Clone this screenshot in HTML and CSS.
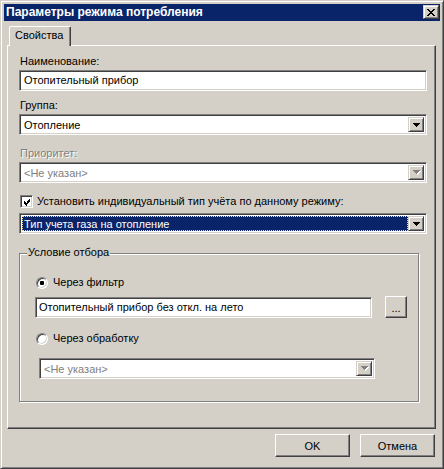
FILE: index.html
```html
<!DOCTYPE html>
<html lang="ru">
<head>
<meta charset="utf-8">
<title>Параметры режима потребления</title>
<link rel="stylesheet" href="styles.css">
</head>
<body>
<div class="window">
  <div class="titlebar">
    <span class="title">Параметры режима потребления</span>
    <span class="close">
      <svg width="8" height="7" viewBox="0 0 8 7" shape-rendering="crispEdges"><path fill="#000" d="M0 0h2v1H0zM6 0h2v1H6zM1 1h2v1H1zM5 1h2v1H5zM2 2h4v1H2zM3 3h2v1H3zM2 4h4v1H2zM1 5h2v1H1zM5 5h2v1H5zM0 6h2v1H0zM6 6h2v1H6z"/></svg>
    </span>
  </div>
  <div class="tabs"><div class="tab">Свойства</div></div>
  <div class="panel">
    <div class="label">Наименование:</div>
    <div class="field sunken">Отопительный прибор</div>

    <div class="label l-group">Группа:</div>
    <div class="combo sunken">
      <span class="combo-text">Отопление</span>
      <span class="drop"><svg width="7" height="4" viewBox="0 0 7 4" shape-rendering="crispEdges"><path fill="#000" d="M0 0h7v1H0zM1 1h5v1H1zM2 2h3v1H2zM3 3h1v1H3z"/></svg></span>
    </div>

    <div class="label l-prio disabled">Приоритет:</div>
    <div class="combo sunken">
      <span class="combo-text gray">&lt;Не указан&gt;</span>
      <span class="drop"><svg width="8" height="5" viewBox="0 0 8 5" shape-rendering="crispEdges"><path fill="#fff" d="M1 1h7v1H1zM2 2h5v1H2zM3 3h3v1H3zM4 4h1v1H4z"/><path fill="#808080" d="M0 0h7v1H0zM1 1h5v1H1zM2 2h3v1H2zM3 3h1v1H3z"/></svg></span>
    </div>

    <div class="check-row">
      <span class="checkbox sunken"><svg width="9" height="9" viewBox="0 0 9 9" shape-rendering="crispEdges"><path fill="#000" d="M7 1h1v1H7zM6 2h2v1H6zM1 3h1v1H1zM5 3h3v1H5zM1 4h2v1H1zM4 4h3v1H4zM1 5h5v1H1zM2 6h3v1H2zM3 7h1v1H3z"/></svg></span>
      <span>Установить индивидуальный тип учёта по данному режиму:</span>
    </div>
    <div class="combo sunken combo-sel">
      <span class="combo-text selected">Тип учета газа на отопление</span>
      <span class="drop"><svg width="7" height="4" viewBox="0 0 7 4" shape-rendering="crispEdges"><path fill="#000" d="M0 0h7v1H0zM1 1h5v1H1zM2 2h3v1H2zM3 3h1v1H3z"/></svg></span>
    </div>

    <div class="groupbox">
      <span class="legend">Условие отбора</span>
      <div class="radio-row first">
        <span class="radio on"></span>
        <span>Через фильтр</span>
      </div>
      <div class="filter-row">
        <div class="field sunken filter-field">Отопительный прибор без откл. на лето</div>
        <div class="btn small">...</div>
      </div>
      <div class="radio-row second">
        <span class="radio"></span>
        <span>Через обработку</span>
      </div>
      <div class="combo sunken inner-combo">
        <span class="combo-text gray">&lt;Не указан&gt;</span>
        <span class="drop"><svg width="8" height="5" viewBox="0 0 8 5" shape-rendering="crispEdges"><path fill="#fff" d="M1 1h7v1H1zM2 2h5v1H2zM3 3h3v1H3zM4 4h1v1H4z"/><path fill="#808080" d="M0 0h7v1H0zM1 1h5v1H1zM2 2h3v1H2zM3 3h1v1H3z"/></svg></span>
      </div>
    </div>
  </div>
  <div class="buttons">
    <div class="btn push">OK</div>
    <div class="btn push">Отмена</div>
  </div>
</div>
</body>
</html>
```
FILE: styles.css
```css
* { box-sizing: border-box; }
html, body { margin: 0; padding: 0; background: #d4d0c8; }
body {
  font-family: "Liberation Sans", Arial, sans-serif;
  font-size: 11px;
  color: #000;
}
.window {
  width: 444px;
  height: 469px;
  background: #d4d0c8;
  border: 1px solid;
  border-color: #d4d0c8 #404040 #404040 #d4d0c8;
  box-shadow: inset 1px 1px 0 #fff, inset -1px -1px 0 #808080;
  padding: 3px;
  display: flex;
  flex-direction: column;
}
.titlebar {
  height: 17px;
  background: #0a246a;
  color: #fff;
  display: flex;
  justify-content: space-between;
  align-items: flex-start;
  padding-left: 2px;
}
.title {
  font-weight: bold;
  font-size: 12px;
  line-height: 17px;
}
.close {
  width: 16px;
  height: 14px;
  margin-top: 1px;
  margin-right: 1px;
  background: #d4d0c8;
  border: 1px solid;
  border-color: #d4d0c8 #404040 #404040 #d4d0c8;
  box-shadow: inset 1px 1px 0 #fff, inset -1px -1px 0 #808080;
  display: flex;
  align-items: center;
  justify-content: center;
}
.close svg { display: block; }
.tabs {
  margin-top: 5px;
  padding-left: 5px;
  height: 19px;
  display: flex;
  align-items: flex-start;
}
.tab {
  position: relative;
  z-index: 1;
  width: 62px;
  height: 20px;
  background: #d4d0c8;
  border-top: 1px solid #fff;
  border-left: 1px solid #fff;
  border-right: 1px solid #404040;
  border-top-left-radius: 2px;
  border-top-right-radius: 2px;
  box-shadow: inset -1px 0 0 #808080;
  padding-left: 5px;
  line-height: 17px;
}
.panel {
  margin-left: 3px;
  width: 429px;
  height: 384px;
  border: 1px solid;
  border-color: #fff #404040 #404040 #fff;
  box-shadow: inset -1px -1px 0 #808080;
  padding: 9px 8px 0 11px;
  display: flex;
  flex-direction: column;
}
.label {
  line-height: 13px;
  height: 13px;
  padding-left: 1px;
  margin-bottom: 2px;
}
.l-group { margin-top: 8px; }
.l-prio { margin-top: 12px; }
.disabled { color: #808080; text-shadow: 1px 1px 0 #fff; }
.sunken {
  background: #fff;
  border: 1px solid;
  border-color: #808080 #fff #fff #808080;
  box-shadow: inset 1px 1px 0 #404040, inset -1px -1px 0 #d4d0c8;
}
.field {
  height: 21px;
  padding: 0 4px;
  line-height: 19px;
  white-space: nowrap;
  overflow: hidden;
}
.combo {
  height: 21px;
  padding: 2px;
  display: flex;
  align-items: stretch;
}
.combo-text {
  flex: 1;
  padding-left: 2px;
  line-height: 17px;
  white-space: nowrap;
}
.gray { color: #808080; }
.drop {
  width: 16px;
  background: #d4d0c8;
  border: 1px solid;
  border-color: #d4d0c8 #404040 #404040 #d4d0c8;
  box-shadow: inset 1px 1px 0 #fff, inset -1px -1px 0 #808080;
  display: flex;
  align-items: center;
  justify-content: center;
}
.drop svg { display: block; margin-left: 1px; }
.check-row {
  margin-top: 12px;
  height: 13px;
  display: flex;
  align-items: center;
  gap: 4px;
  line-height: 13px;
  padding-left: 1px;
}
.checkbox {
  width: 13px;
  height: 13px;
  padding: 1px;
  display: flex;
}
.checkbox svg { display: block; margin: 1px 0 0 1px; }
.combo-sel { margin-top: 5px; }
.selected {
  background: #0a246a;
  color: #fff;
  border: 1px dotted #e8e4a0;
  line-height: 15px;
  padding-left: 1px;
}
.groupbox {
  position: relative;
  margin-top: 19px;
  width: 400px;
  height: 149px;
  border: 1px solid #808080;
  box-shadow: inset 1px 1px 0 #fff, 1px 1px 0 #fff;
  padding-top: 22px;
  display: flex;
  flex-direction: column;
}
.legend {
  position: absolute;
  top: -8px;
  left: 7px;
  background: #d4d0c8;
  padding: 0 1px;
  line-height: 13px;
}
.radio-row {
  display: flex;
  align-items: center;
  gap: 5px;
  height: 13px;
  line-height: 13px;
  padding-left: 16px;
}
.radio-row.second { margin-top: 14px; }
.radio {
  width: 12px;
  height: 12px;
  border-radius: 50%;
  background: #fff;
  border: 1px solid;
  border-color: #808080 #fff #fff #808080;
  box-shadow: inset 1px 1px 0 #404040, inset -1px -1px 0 #d4d0c8;
  position: relative;
}
.radio.on::after {
  content: "";
  position: absolute;
  left: 3px;
  top: 3px;
  width: 4px;
  height: 4px;
  border-radius: 1px;
  background: #000;
}
.filter-row {
  margin-top: 7px;
  display: flex;
  align-items: flex-start;
  padding-left: 15px;
}
.filter-field {
  width: 337px;
  margin-top: 1px;
  height: 21px;
  padding-left: 3px;
}
.btn {
  background: #d4d0c8;
  border: 1px solid;
  border-color: #fff #404040 #404040 #fff;
  box-shadow: inset -1px -1px 0 #808080;
  display: flex;
  align-items: center;
  justify-content: center;
}
.btn.small {
  margin-left: 13px;
  width: 22px;
  height: 22px;
  padding-top: 2px;
}
.inner-combo {
  margin-top: 13px;
  margin-left: 19px;
  width: 336px;
}
.buttons {
  margin-top: 5px;
  display: flex;
  justify-content: flex-end;
  gap: 10px;
  padding-right: 5px;
}
.btn.push {
  width: 75px;
  height: 23px;
  font-size: 11px;
}
```
